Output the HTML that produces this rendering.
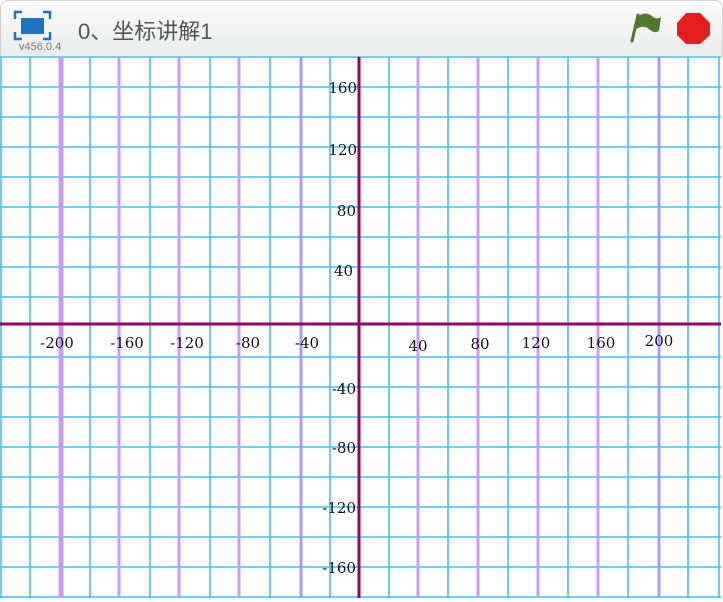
<!DOCTYPE html>
<html><head><meta charset="utf-8"><style>
html,body{margin:0;padding:0;background:#fff;width:723px;height:602px;overflow:hidden}
.hdr{position:absolute;left:0;top:0;width:721px;height:56px;background:linear-gradient(#fbfbfb,#e9eaea);border:1px solid #d0d0d0;border-bottom:none;border-radius:8px 8px 0 0}
.title{position:absolute;left:78px;top:14px;font:22px "Liberation Sans","Noto Sans CJK SC",sans-serif;color:#555}
.ver{position:absolute;left:19px;top:41px;font:11px "Liberation Sans",sans-serif;color:#777}
svg{position:absolute;left:0;top:0}
</style></head><body>
<div class="hdr"></div>
<div class="title">0、坐标讲解1</div>
<div class="ver">v456.0.4</div>
<svg width="723" height="602">
<g fill="none" stroke="#1e74bf" stroke-width="2.5">
<path d="M15 19V12H22M43 12H50V19M50 32V39H43M22 39H15V32"/>
</g>
<rect x="21" y="18" width="23" height="16" fill="#1a73c3"/>
<path d="M637 17 Q646 10 653 17 Q657 20 661 17 L659 31 Q654 34 649 29 Q642 24 635 30 Z" fill="#4d7a2f"/>
<path d="M638 15 L632 41" stroke="#4d7a2f" stroke-width="3" stroke-linecap="round"/>
<polygon points="686,13 700,13 710,23 710,35 700,44 686,44 677,35 677,23" fill="#e51d1d"/>
<rect x="0" y="56" width="721" height="542" fill="#fff"/>
<g stroke="#3cc4ee" stroke-width="1.6">
<path d="M0 57H721M0 87H721M0 117H721M0 147H721M0 177H721M0 207H721M0 237H721M0 267H721M0 297H721M0 357H721M0 387H721M0 417H721M0 447H721M0 477H721M0 507H721M0 537H721M0 567H721M0 597H721"/>
<path d="M1 57V598M30 57V598M90 57V598M150 57V598M210 57V598M270 57V598M330 57V598M389 57V598M448 57V598M508 57V598M568 57V598M628 57V598M688 57V598M719 57V598"/>
</g>
<g stroke="#cc99ff">
<path d="M61 57V598" stroke-width="5"/>
<path d="M119 57V598M179 57V598M239 57V598M418 57V598M478 57V598M538 57V598M598 57V598" stroke-width="3"/>
<path d="M301 57V598M659 57V598" stroke="#aa99ff" stroke-width="3"/>
</g>
<path d="M0 324H721" stroke="#990066" stroke-width="3"/>
<path d="M359 57V598" stroke="#990066" stroke-width="3"/>
<g font-family="DejaVu Serif,serif" font-size="15" fill="#111" text-anchor="middle">
<text x="57" y="348">-200</text><text x="127" y="348">-160</text><text x="187" y="348">-120</text><text x="248" y="348">-80</text><text x="307" y="348">-40</text>
<text x="418" y="351">40</text><text x="480" y="349">80</text><text x="536" y="348">120</text><text x="601" y="348">160</text><text x="659" y="346">200</text>
</g>
<g font-family="DejaVu Serif,serif" font-size="15" fill="#111" text-anchor="end">
<text x="357" y="93">160</text><text x="357" y="155">120</text><text x="356" y="216">80</text><text x="353" y="276">40</text>
<text x="356" y="394">-40</text><text x="356" y="453">-80</text><text x="356" y="513">-120</text><text x="356" y="573">-160</text>
</g>
</svg>
</body></html>
